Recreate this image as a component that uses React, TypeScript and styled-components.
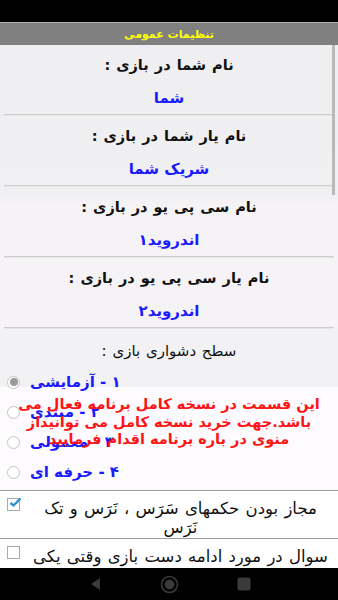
import React from 'react';
import styled, { createGlobalStyle } from 'styled-components';

const GlobalStyle = createGlobalStyle`
  html, body {
    margin: 0;
    padding: 0;
    background: #000;
  }
  * {
    box-sizing: border-box;
  }
`;

const Screen = styled.div`
  width: 338px;
  height: 600px;
  display: flex;
  flex-direction: column;
  overflow: hidden;
  font-family: 'DejaVu Sans', 'Liberation Sans', sans-serif;
`;

const StatusBar = styled.div`
  height: 23px;
  flex-shrink: 0;
  background: #000;
  border-bottom: 1px solid #b4b4b4;
`;

const TitleBar = styled.div`
  height: 22px;
  flex-shrink: 0;
  background: #808080;
  color: #ffff00;
  font-size: 11px;
  font-weight: bold;
  display: flex;
  align-items: center;
  justify-content: center;
  direction: rtl;
`;

const Content = styled.div`
  flex: 1;
  position: relative;
  overflow: hidden;
  background: linear-gradient(#efeef0 0px, #f0eff1 150px, #f6f3f6 160px, #f5f3f6 290px, #f2f2f4 350px);
`;

const ScrollThumb = styled.div`
  position: absolute;
  top: 0;
  right: 3px;
  width: 3px;
  height: 150px;
  background: #b8b8b8;
`;

const Section = styled.div`
  padding-top: 9px;
  display: flex;
  flex-direction: column;
  align-items: center;
`;

const Label = styled.div<{ $bold?: boolean }>`
  direction: rtl;
  height: 22px;
  line-height: 22px;
  font-size: 14.5px;
  word-spacing: 1px;
  font-weight: ${(p) => (p.$bold ? 'bold' : 'normal')};
  color: #111;
  white-space: nowrap;
`;

const Value = styled.div`
  direction: rtl;
  margin-top: 11px;
  height: 22px;
  line-height: 22px;
  font-size: 15px;
  font-weight: bold;
  color: #1a1aff;
`;

const Divider = styled.div`
  align-self: stretch;
  margin: 5px 4px 0 4px;
  height: 2px;
  border-top: 1px solid #cdcdcd;
  border-bottom: 1px solid #e6e6e6;
`;

const DifficultyBlock = styled.div`
  position: relative;
  padding: 11px 0 3px 0;
  display: flex;
  flex-direction: column;
  background: linear-gradient(#f2f2f4 58px, #fdfbfe 58px);
`;

const DifficultyTitle = styled(Label)`
  align-self: center;
  font-size: 15px;
`;

const RadioList = styled.div`
  margin-top: 5px;
  display: flex;
  flex-direction: column;
  padding-left: 7px;
`;

const RadioRow = styled.div`
  height: 30px;
  display: flex;
  align-items: center;
  gap: 10px;
`;

const RadioCircle = styled.span<{ $checked?: boolean }>`
  width: 13px;
  height: 13px;
  border-radius: 50%;
  border: 1px solid #c4c4c4;
  background: #fff;
  display: flex;
  align-items: center;
  justify-content: center;
  &::after {
    content: '';
    width: 8px;
    height: 8px;
    border-radius: 50%;
    background: ${(p) => (p.$checked ? '#9a9a9a' : 'transparent')};
  }
`;

const RadioText = styled.span`
  direction: rtl;
  font-size: 15px;
  font-weight: bold;
  color: #1a1aff;
`;

const LockedNotice = styled.div`
  position: absolute;
  left: 0;
  right: 0;
  top: 67px;
  padding: 0 10px;
  direction: rtl;
  text-align: center;
  white-space: nowrap;
  color: #ff1414;
  font-size: 14.5px;
  font-weight: bold;
  line-height: 17.5px;
`;

const CheckRow = styled.div`
  border-top: 1px solid #9c9c9c;
  background: #fff;
  display: flex;
  align-items: flex-start;
  padding: 6px 5px 1px 7px;
  gap: 8px;
`;

const CheckBox = styled.span`
  flex-shrink: 0;
  width: 13px;
  height: 13px;
  border: 1px solid #a8a8a8;
  background: #fff;
  position: relative;
  margin-top: 1px;
`;

const CheckText = styled.div`
  flex: 1;
  direction: rtl;
  text-align: center;
  font-size: 16.5px;
  word-spacing: 1px;
  color: #111;
  line-height: 19px;
  padding-top: 2px;
`;

const CheckMark = styled.svg`
  position: absolute;
  left: 1px;
  top: -2px;
`;

const NavBar = styled.div`
  height: 32px;
  flex-shrink: 0;
  background: #000;
  display: flex;
  align-items: center;
  justify-content: center;
  gap: 58px;
  padding-left: 2px;
`;

const settings = [
  { label: 'نام شما در بازی :', value: 'شما' },
  { label: 'نام یار شما در بازی :', value: 'شریک شما' },
  { label: 'نام سی پی یو در بازی :', value: 'اندروید۱' },
  { label: 'نام یار سی پی یو در بازی :', value: 'اندروید۲' },
];

const levels = ['۱ - آزمایشی', '۲ - مبتدی', '۳ - معمولی', '۴ - حرفه ای'];

export default function App() {
  return (
    <>
      <GlobalStyle />
      <Screen>
        <StatusBar />
        <TitleBar>تنظیمات عمومی</TitleBar>
        <Content>
          <ScrollThumb />
          {settings.map((s) => (
            <Section key={s.label}>
              <Label $bold>{s.label}</Label>
              <Value>{s.value}</Value>
              <Divider />
            </Section>
          ))}
          <DifficultyBlock>
            <DifficultyTitle>سطح دشواری بازی :</DifficultyTitle>
            <RadioList>
              {levels.map((l, i) => (
                <RadioRow key={l}>
                  <RadioCircle $checked={i === 0} />
                  <RadioText>{l}</RadioText>
                </RadioRow>
              ))}
            </RadioList>
            <LockedNotice>
              این قسمت در نسخه کامل برنامه فعال می
              <br />
              باشد.جهت خرید نسخه کامل می توانیداز
              <br />
              منوی در باره برنامه اقدام فرمایید
            </LockedNotice>
          </DifficultyBlock>
          <CheckRow>
            <CheckBox>
              <CheckMark width="13" height="11" viewBox="0 0 13 11">
                <path d="M1.5 6 L4.5 8.5 L11.5 1.5" stroke="#2a8fd0" strokeWidth="2.4" fill="none" />
              </CheckMark>
            </CheckBox>
            <CheckText>مجاز بودن حکمهای سَرَس ، نَرَس و تک نَرَس</CheckText>
          </CheckRow>
          <CheckRow>
            <CheckBox />
            <CheckText>سوال در مورد ادامه دست بازی وقتی یکی از طرفین بازی را برده باشد</CheckText>
          </CheckRow>
        </Content>
        <NavBar>
          <svg width="12" height="14" viewBox="0 0 12 14">
            <path d="M10 1 L10 13 L1 7 Z" fill="#3a3a3a" />
          </svg>
          <svg width="19" height="19" viewBox="0 0 19 19">
            <circle cx="9.5" cy="9.5" r="8" stroke="#3a3a3a" strokeWidth="1.6" fill="none" />
            <circle cx="9.5" cy="9.5" r="4.8" fill="#3a3a3a" />
          </svg>
          <svg width="14" height="14" viewBox="0 0 14 14">
            <rect x="0.5" y="0.5" width="13" height="13" rx="2" fill="#3a3a3a" />
          </svg>
        </NavBar>
      </Screen>
    </>
  );
}
